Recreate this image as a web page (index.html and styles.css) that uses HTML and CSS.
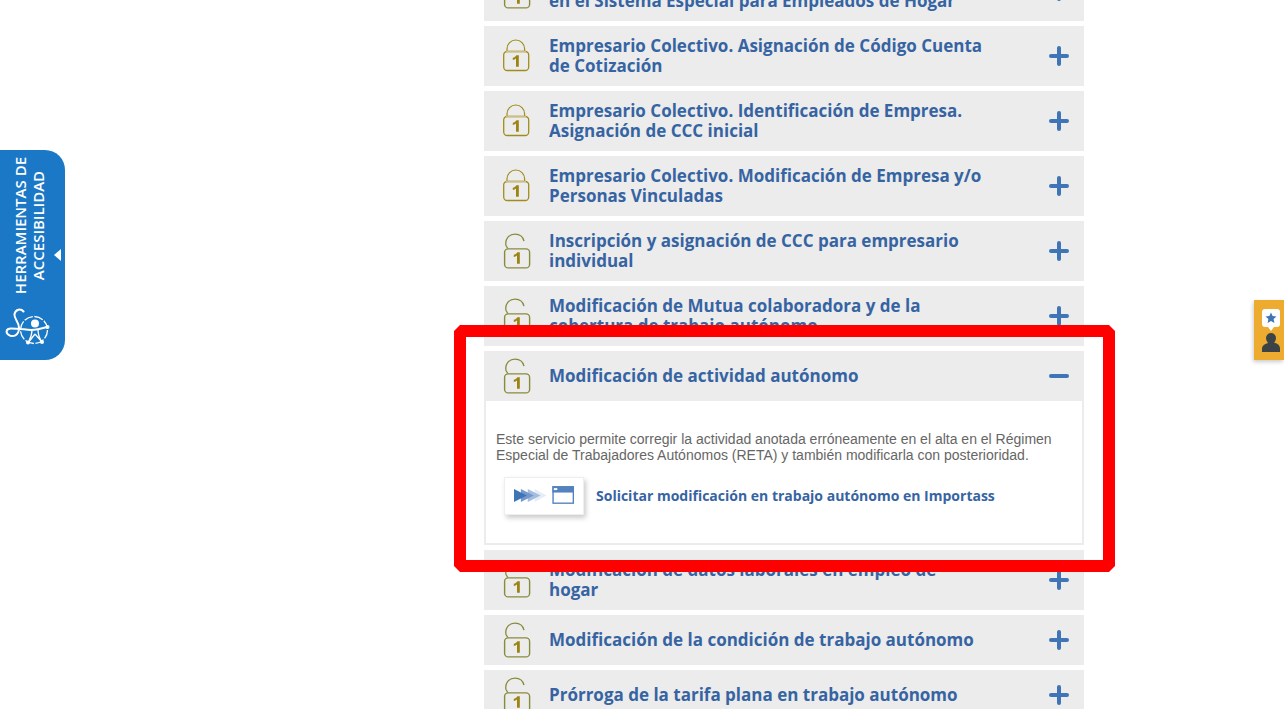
FILE: index.html
```html
<!DOCTYPE html>
<html lang="es">
<head>
<meta charset="utf-8">
<title>Servicios</title>
<link rel="stylesheet" href="styles.css">
</head>
<body>
<svg class="sprite" aria-hidden="true">
  <symbol id="closed" viewBox="0 0 28 36">
    <path d="M4 13.500V10.800a8.800 8.800 0 0 1 17.600 0v2.700" fill="none" stroke="#a08c1c" stroke-width="1.200"/>
    <rect x=".7" y="13.500" width="25" height="19" rx="3.500" fill="none" stroke="#a08c1c" stroke-width="1.300"/>
    <path d="M3 13.500h20" stroke="#cbbf86" stroke-width="1.500"/>
    <path d="M15.800 17.200v11.600h-2.800v-8.200c-1 .8-2 1.200-3.200 1.500v-2.300c1.700-.5 3-1.500 3.600-2.600z" fill="#9b8412"/>
  </symbol>
  <symbol id="open" viewBox="0 0 28 36">
    <path d="M4.800 15.500 3 12.500C1.700 6 6 1.200 12 1.200c4.500 0 8 2.700 9 7" fill="none" stroke="#8a8a3c" stroke-width="1.300"/>
    <rect x="1.600" y="15.900" width="25" height="19" rx="3.500" fill="none" stroke="#8a8a3c" stroke-width="1.400"/>
    <path d="M16.800 19.200v11.600h-2.800v-8.200c-1 .8-2 1.200-3.200 1.500v-2.300c1.700-.5 3-1.500 3.600-2.600z" fill="#9b8412"/>
  </symbol>
  <symbol id="plus" viewBox="0 0 20 20">
    <path d="M2 10h16M10 2v16" stroke="#3f74b6" stroke-width="4" stroke-linecap="round"/>
  </symbol>
  <symbol id="minus" viewBox="0 0 20 20">
    <path d="M2 10h16" stroke="#3f74b6" stroke-width="4" stroke-linecap="round"/>
  </symbol>
</svg>

<main class="page">
  <ul class="services">
    <li><button class="head" type="button"><svg class="lock"><use href="#open"/></svg><span class="title">Alta, baja y modificación de datos<br>en el Sistema Especial para Empleados de Hogar</span><svg class="sign"><use href="#plus"/></svg></button></li>
    <li><button class="head" type="button"><svg class="lock"><use href="#closed"/></svg><span class="title">Empresario Colectivo. Asignación de Código Cuenta de Cotización</span><svg class="sign"><use href="#plus"/></svg></button></li>
    <li><button class="head" type="button"><svg class="lock"><use href="#closed"/></svg><span class="title">Empresario Colectivo. Identificación de Empresa. Asignación de CCC inicial</span><svg class="sign"><use href="#plus"/></svg></button></li>
    <li><button class="head" type="button"><svg class="lock"><use href="#closed"/></svg><span class="title">Empresario Colectivo. Modificación de Empresa y/o Personas Vinculadas</span><svg class="sign"><use href="#plus"/></svg></button></li>
    <li><button class="head" type="button"><svg class="lock"><use href="#open"/></svg><span class="title">Inscripción y asignación de CCC para empresario individual</span><svg class="sign"><use href="#plus"/></svg></button></li>
    <li><button class="head" type="button"><svg class="lock"><use href="#open"/></svg><span class="title">Modificación de Mutua colaboradora y de la cobertura de trabajo autónomo</span><svg class="sign"><use href="#plus"/></svg></button></li>
    <li class="expanded">
      <button class="head" type="button" aria-expanded="true" aria-controls="detail"><svg class="lock"><use href="#open"/></svg><span class="title">Modificación de actividad autónomo</span><svg class="sign"><use href="#minus"/></svg></button>
      <div class="detail" id="detail">
        <p class="text">Este servicio permite corregir la actividad anotada erróneamente en el alta en el Régimen Especial de Trabajadores Autónomos (RETA) y también modificarla con posterioridad.</p>
        <a class="action" href="#">
          <span class="chip">
            <svg class="go" viewBox="0 0 62 20">
              <path d="M21 3v13l12-6.500z" fill="#e4ecf6"/>
              <path d="M14 3v13l13-6.500z" fill="#a3bcdf"/>
              <path d="M7 3v13l13-6.500z" fill="#7299cc"/>
              <path d="M0 3v13l13-6.500z" fill="#3f74b6"/>
              <rect x="39.700" y=".7" width="20.600" height="16.600" fill="#fff" stroke="#5482bf" stroke-width="1.400"/>
              <path d="M39 0h22v6.500H39z" fill="#5482bf"/>
              <path d="M40.500 2h3.500v2h-3.500z" fill="#fff"/>
            </svg>
          </span>
          <span>Solicitar modificación en trabajo autónomo en Importass</span>
        </a>
      </div>
      <div class="frame"></div>
    </li>
    <li><button class="head" type="button"><svg class="lock"><use href="#open"/></svg><span class="title">Modificación de datos laborales en empleo de hogar</span><svg class="sign"><use href="#plus"/></svg></button></li>
    <li><button class="head" type="button"><svg class="lock"><use href="#open"/></svg><span class="title">Modificación de la condición de trabajo autónomo</span><svg class="sign"><use href="#plus"/></svg></button></li>
    <li><button class="head" type="button"><svg class="lock"><use href="#open"/></svg><span class="title">Prórroga de la tarifa plana en trabajo autónomo</span><svg class="sign"><use href="#plus"/></svg></button></li>
  </ul>
</main>

<button class="tools" type="button">
  <span class="tools-label">HERRAMIENTAS DE<br>ACCESIBILIDAD</span>
  <svg class="tools-arrow" viewBox="0 0 7 12"><path d="M7 0v12L0 6z" fill="#fff"/></svg>
  <svg class="tools-logo" viewBox="0 0 46 40" fill="none" stroke="#fff">
    <path d="M18.500 4.500C16 1.500 10.500 2 9.500 7c-.7 5 5 8 4.500 14.500C13.500 29 8 30 4.500 28.300 0 26 1 21.500 6 21.500c7 0 13 1 20 1.500 6 0 11-1.500 16-3" stroke-width="2" stroke-linecap="round"/>
    <circle cx="29" cy="23" r="13.500" stroke-width="1.300" stroke-dasharray="9 1.600"/>
    <path d="M27 23c0 6-2 9-4 13M33 22c0 6 1 9 4 13M30 27l-7 9M30 27l7 8" stroke-width="1.300"/>
    <circle cx="30" cy="16.500" r="4" fill="#fff" stroke="none"/>
    <circle cx="42.500" cy="20" r="2" fill="#fff" stroke="none"/>
    <circle cx="23" cy="35.500" r="2" fill="#fff" stroke="none"/>
    <circle cx="37" cy="35" r="2" fill="#fff" stroke="none"/>
  </svg>
</button>

<button class="feedback" type="button" aria-label="Valoración">
  <svg viewBox="0 0 18 44">
    <path d="M3 0h12a3 3 0 0 1 3 3v12a3 3 0 0 1-3 3h-3l-3 4-3-4H3a3 3 0 0 1-3-3V3a3 3 0 0 1 3-3z" fill="#fff"/>
    <path d="m9 3.500 1.600 3.500 3.900.4-2.900 2.600.8 3.900L9 12l-3.400 1.900.8-3.900-2.900-2.600 3.900-.4z" fill="#3f74b6"/>
    <path d="M9 24a5 5 0 0 1 5 5c0 2-1 3.500-2 4.500 4 1 6 3 6 6V43H0v-3.500c0-2.500 2-4.500 6-5.500-1-1.500-2-3-2-5a5 5 0 0 1 5-5z" fill="#3c4347"/>
  </svg>
</button>
</body>
</html>
```
FILE: styles.css
```css
* { box-sizing: border-box; }
body {
  margin: 0;
  height: 100vh;
  overflow: hidden;
  background: #fff;
  font-family: "Open Sans", sans-serif;
}
button { border: 0; font: inherit; cursor: pointer; }
.sprite { position: absolute; width: 0; height: 0; }
.page {
  max-width: 884px;
  margin: -39px auto 0;
  padding-left: 284px;
}
.services {
  display: flex;
  flex-direction: column;
  gap: 5px;
  margin: 0;
  padding: 0;
  list-style: none;
}
.head {
  display: flex;
  align-items: center;
  width: 100%;
  min-height: 50px;
  padding: 10px 15px 10px 19px;
  background: #ececec;
  color: #3664a2;
  text-align: left;
  font-size: 17px;
  font-weight: 700;
  line-height: 20px;
}
.lock { width: 28px; height: 36px; margin: -8px 18px -8px 0; flex: none; }
.title { max-width: 436px; margin-right: auto; }
.sign { width: 20px; height: 20px; flex: none; }
.expanded { position: relative; z-index: 1; }
.detail {
  border: 2px solid #ececec;
  border-top: 0;
  padding: 30px 10px 28px;
  background: #fff;
}
.text {
  margin: 0 0 14px;
  color: #666;
  font: 14px/16px "Liberation Sans", Arial, sans-serif;
}
.action {
  display: flex;
  align-items: center;
  gap: 12px;
  padding-left: 8px;
  color: #3664a2;
  font-size: 14px;
  line-height: 20px;
  font-weight: 700;
  text-decoration: none;
}
.chip {
  display: flex;
  width: 80px;
  height: 38px;
  padding: 8px 8px 8px 9px;
  border: 1px solid #eee;
  background: #fff;
  box-shadow: 2px 3px 5px #ccc;
}
.go { width: 62px; height: 20px; }
.frame {
  position: absolute;
  inset: -26px -31px -27px -30px;
  border: 12px solid #f00;
  clip-path: polygon(6px 0, calc(100% - 6px) 0, 100% 6px, 100% calc(100% - 6px), calc(100% - 6px) 100%, 6px 100%, 0 calc(100% - 6px), 0 6px);
  pointer-events: none;
}
.tools {
  position: fixed;
  left: 0;
  top: 150px;
  display: grid;
  grid-template: 142px 1fr / 42px 1fr;
  align-items: center;
  column-gap: 7px;
  width: 65px;
  height: 210px;
  padding: 5px 3px 8px 5px;
  border-radius: 0 20px 20px 0;
  background: #1a78c6;
  color: #fff;
}
.tools-label {
  justify-self: end;
  writing-mode: vertical-rl;
  transform: rotate(180deg);
  text-align: center;
  font: 600 15px/18px "Open Sans", sans-serif;
}
.tools-arrow { width: 7px; height: 12px; margin-top: 58px; }
.tools-logo { grid-column: 1 / 3; align-self: end; width: 46px; height: 40px; margin-bottom: 5px; }
.feedback {
  position: fixed;
  right: 0;
  top: 300px;
  display: flex;
  width: 30px;
  height: 60px;
  padding: 9px 4px 7px 8px;
  background: #edab2f;
  box-shadow: -1px 2px 4px #ccc;
}
.feedback svg { width: 18px; height: 44px; }
```
